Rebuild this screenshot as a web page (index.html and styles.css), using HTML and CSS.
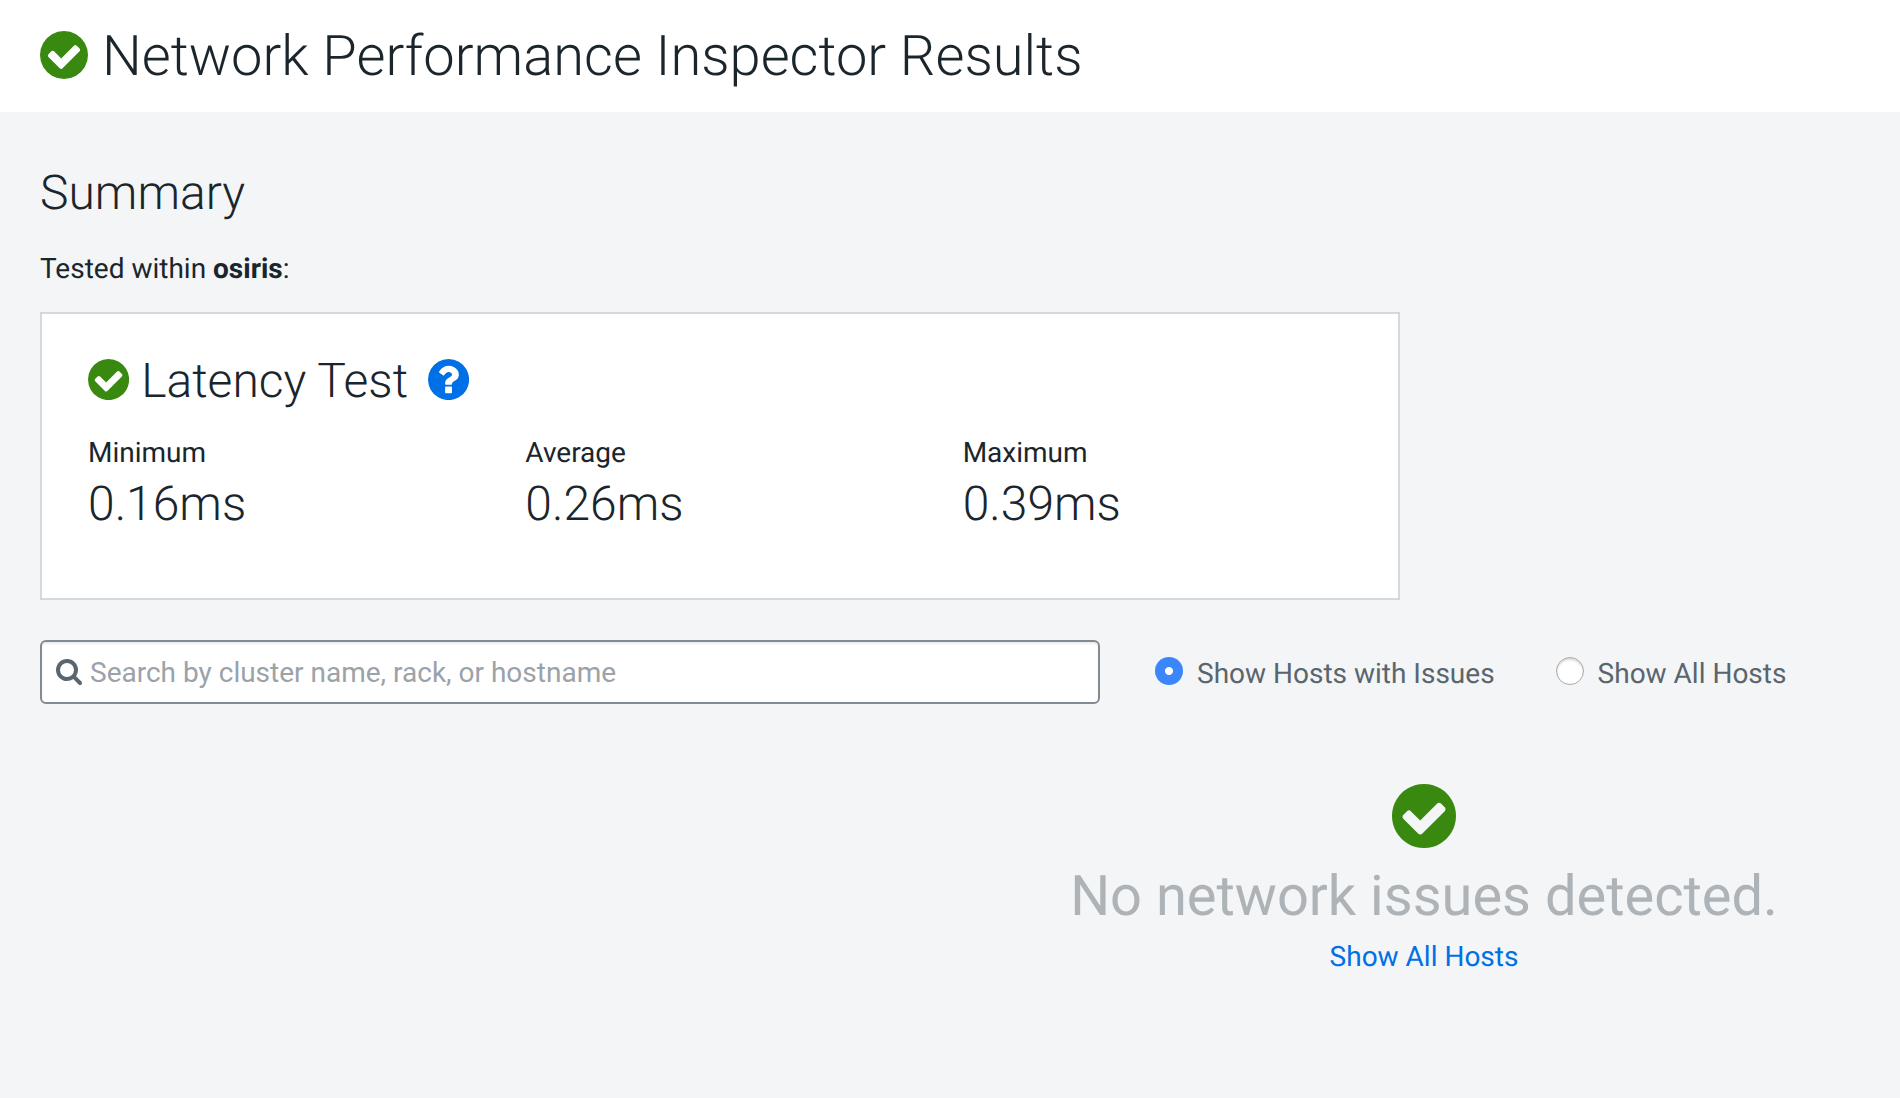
FILE: index.html
```html
<!DOCTYPE html>
<html lang="en">
<head>
<meta charset="utf-8">
<title>Network Performance Inspector Results</title>
<link rel="stylesheet" href="styles.css">
</head>
<body>
<svg class="sprite" aria-hidden="true">
  <symbol id="check" viewBox="0 128 1536 1536"><path d="M1284 734q0-28-18-46l-91-90q-19-19-45-19t-45 19l-408 407-226-226q-19-19-45-19t-45 19l-91 90q-18 18-18 46 0 27 18 45l362 362q19 19 45 19 27 0 46-19l543-543q18-18 18-45zm252 162q0 209-103 385.5t-279.5 279.5-385.5 103-385.5-103-279.5-279.5-103-385.5 103-385.5 279.5-279.5 385.5-103 385.5 103 279.5 279.5 103 385.5z"/></symbol>
  <symbol id="help" viewBox="0 128 1536 1536"><path d="M896 1376v-192q0-14-9-23t-23-9h-192q-14 0-23 9t-9 23v192q0 14 9 23t23 9h192q14 0 23-9t9-23zm256-672q0-88-55.500-163t-138.500-116-170-41q-243 0-371 213-15 24 8 42l132 100q7 6 19 6 16 0 25-12 53-68 86-92 34-24 86-24 48 0 85.500 26t37.500 59q0 38-20 61t-68 45q-63 28-115.500 86.500t-52.500 125.500v36q0 14 9 23t23 9h192q14 0 23-9t9-23q0-19 21.500-49.500t54.500-49.500q32-18 49-28.500t46-35 44.500-48 28-60.500 12.500-81zm384 192q0 209-103 385.500t-279.500 279.500-385.500 103-385.500-103-279.500-279.500-103-385.500 103-385.500 279.500-279.500 385.500-103 385.500 103 279.500 279.500 103 385.500z"/></symbol>
  <symbol id="search" viewBox="0 128 1664 1664"><path d="M1152 832q0-185-131.500-316.500t-316.500-131.500-316.500 131.500-131.500 316.500 131.500 316.500 316.500 131.500 316.500-131.500 131.500-316.500zm512 832q0 52-38 90t-90 38q-54 0-90-38l-343-342q-179 124-399 124-143 0-273.500-55.500t-225-150-150-225-55.500-273.500 55.500-273.500 150-225 225-150 273.500-55.500 273.500 55.500 225 150 150 225 55.500 273.500q0 220-124 399l343 343q37 37 37 90z"/></symbol>
</svg>
<header class="header">
  <svg class="icon icon-title"><use href="#check"/></svg>
  <h1 class="title">Network Performance Inspector Results</h1>
</header>
<main class="main">
  <h2 class="summary">Summary</h2>
  <p class="scope">Tested within <strong>osiris</strong>:</p>
  <section class="card">
    <div class="card-head">
      <svg class="icon icon-card"><use href="#check"/></svg>
      <h2 class="card-title">Latency Test</h2>
      <svg class="icon icon-card icon-help"><use href="#help"/></svg>
    </div>
    <div class="stats">
      <div><div class="label">Minimum</div><div class="value">0.16ms</div></div>
      <div><div class="label">Average</div><div class="value">0.26ms</div></div>
      <div><div class="label">Maximum</div><div class="value">0.39ms</div></div>
    </div>
  </section>
  <div class="filters">
    <div class="search">
      <svg class="icon-search"><use href="#search"/></svg>
      <input class="search-input" type="text" placeholder="Search by cluster name, rack, or hostname">
    </div>
    <label class="option option-issues"><input class="radio" type="radio" name="hosts" checked><span>Show Hosts with Issues</span></label>
    <label class="option"><input class="radio" type="radio" name="hosts"><span>Show All Hosts</span></label>
  </div>
  <section class="empty">
    <svg class="icon icon-empty"><use href="#check"/></svg>
    <p class="empty-text">No network issues detected.</p>
    <a class="link" href="#">Show All Hosts</a>
  </section>
</main>
</body>
</html>
```
FILE: styles.css
```css
* { box-sizing: border-box; }
body {
  margin: 0;
  min-height: 100vh;
  background: #f3f5f7;
  color: #1b252c;
  font: 28px/40px Roboto, "Liberation Sans", sans-serif;
  text-rendering: geometricPrecision;
}
h1, h2, p { margin: 0; }
.sprite { position: absolute; width: 0; height: 0; }
.icon { display: block; flex: none; fill: #39880f; }
.header {
  display: flex;
  align-items: center;
  height: 112px;
  padding: 0 40px;
  background: #fff;
}
.icon-title { width: 48px; height: 48px; margin: -2px 14px 0 0; }
.title { font-size: 56px; line-height: 112px; font-weight: 300; }
.main { padding: 53px 40px 0; }
.summary { font-size: 48px; line-height: 56px; font-weight: 300; }
.scope { margin-top: 28px; }
.card {
  width: 1360px;
  height: 288px;
  margin-top: 23px;
  padding: 39px 0 0 46px;
  border: 2px solid #d6d8db;
  background: #fff;
}
.card-head { display: flex; align-items: center; height: 56px; }
.icon-card { width: 41.14px; height: 41.14px; margin-top: -3px; }
.card-title { margin: 0 20px 0 12px; font-size: 48px; line-height: 56px; font-weight: 300; }
.icon-help { fill: #0070e6; }
.stats { display: grid; grid-template-columns: repeat(3, 437.33px); margin-top: 24px; }
.value { margin-top: 3px; font-size: 48px; line-height: 56px; font-weight: 300; }
.filters { display: flex; align-items: center; height: 64px; margin-top: 40px; color: #5a656d; }
.search {
  display: flex;
  align-items: center;
  width: 1060px;
  height: 64px;
  margin-right: 55px;
  padding: 0 14px;
  border: 2px solid #808b93;
  border-radius: 6px;
  background: #fff;
  box-shadow: inset 0 2px 2px rgba(0, 0, 0, .075);
}
.icon-search { flex: none; width: 26px; height: 26px; margin-right: 8px; fill: #5a656d; }
.search-input {
  flex: 1;
  height: 60px;
  padding: 0;
  border: 0;
  outline: 0;
  background: none;
  color: inherit;
  font: inherit;
}
.search-input::placeholder { color: #9ba2a8; opacity: 1; }
.option { display: flex; align-items: center; padding-top: 4px; }
.option-issues { margin-right: 61px; }
.radio {
  appearance: none;
  width: 28px;
  height: 28px;
  margin: -6px 14px 0 0;
  border: 1px solid #a9a9aa;
  border-radius: 50%;
  background: #fff;
  box-shadow: inset 0 2px 2px rgba(0, 0, 0, .15);
}
.radio:checked {
  border: 0;
  background: radial-gradient(circle, #fff 3.6px, #3b86fb 4.4px);
  box-shadow: none;
}
.empty {
  display: flex;
  flex-direction: column;
  align-items: center;
  width: 800px;
  margin: 80px 0 0 984px;
}
.icon-empty { width: 64px; height: 64px; }
.empty-text { margin-top: 16px; color: #adb3b7; font-size: 56px; line-height: 64px; }
.link { margin-top: 9px; color: #0070e6; text-decoration: none; }
```
